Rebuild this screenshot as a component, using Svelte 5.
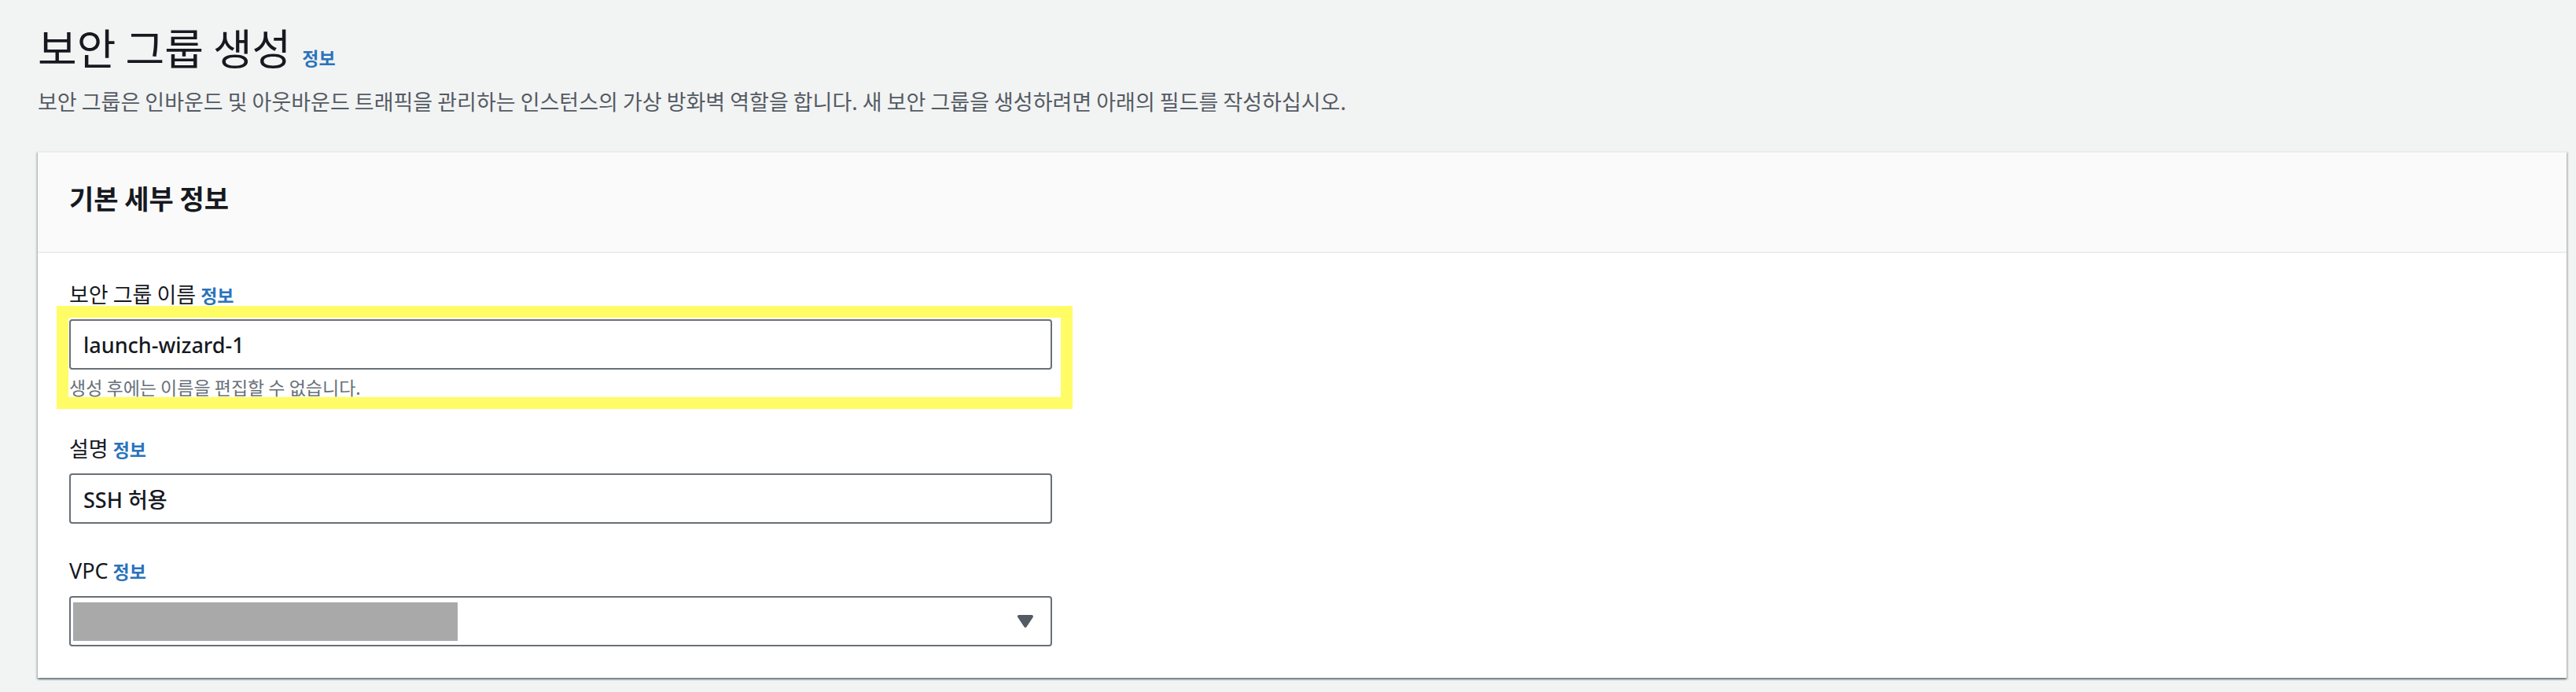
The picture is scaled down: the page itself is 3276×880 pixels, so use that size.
<script>
  let groupName = $state('launch-wizard-1');
  let description = $state('SSH 허용');
  let vpc = $state('');
</script>

<main>
  <header class="page-header">
    <div class="title-row">
      <h1>보안 그룹 생성</h1>
      <a class="info" href="#info-group">정보</a>
    </div>
    <p>보안 그룹은 인바운드 및 아웃바운드 트래픽을 관리하는 인스턴스의 가상 방화벽 역할을 합니다. 새 보안 그룹을 생성하려면 아래의 필드를 작성하십시오.</p>
  </header>

  <section class="panel">
    <div class="panel-header">
      <h2>기본 세부 정보</h2>
    </div>
    <form class="fields">
      <div class="field">
        <div class="label-row">
          <label for="group-name">보안 그룹 이름</label>
          <a class="info" href="#info-name">정보</a>
        </div>
        <div class="control">
          <input id="group-name" type="text" bind:value={groupName} aria-describedby="name-hint" />
          <span id="name-hint" class="hint">생성 후에는 이름을 편집할 수 없습니다.</span>
          <span class="highlight" aria-hidden="true"></span>
        </div>
      </div>

      <div class="field">
        <div class="label-row">
          <label for="description">설명</label>
          <a class="info" href="#info-description">정보</a>
        </div>
        <div class="control">
          <input id="description" type="text" bind:value={description} />
        </div>
      </div>

      <div class="field">
        <div class="label-row">
          <label class="latin" for="vpc">VPC</label>
          <a class="info" href="#info-vpc">정보</a>
        </div>
        <div class="control">
          <select id="vpc" bind:value={vpc}>
            <option value=""></option>
          </select>
          <span class="mask" aria-hidden="true"></span>
          <svg class="caret" viewBox="0 0 20 16" aria-hidden="true">
            <path d="M2 2H18L10 14Z" fill="#545b64" stroke="#545b64" stroke-width="4" stroke-linejoin="round" />
          </svg>
        </div>
      </div>
    </form>
  </section>
</main>

<style>
  :global(body) {
    background: #f2f3f3;
  }

  main {
    padding: 22px 12px 16px 48px;
    color: #16191f;
    font-family: "Noto Sans CJK KR", sans-serif;
    font-size: 27px;
    line-height: 36px;
  }

  h1, h2, p {
    margin: 0;
  }

  .page-header {
    margin-bottom: 41px;
  }

  .title-row {
    display: flex;
    align-items: baseline;
    gap: 14px;
  }

  h1 {
    font-size: 54px;
    font-weight: 400;
    line-height: 76px;
  }

  .info {
    color: #2a73bb;
    font-size: 23px;
    font-weight: 700;
    line-height: 24px;
    text-decoration: none;
  }

  p {
    margin-top: 9px;
    color: #545b64;
    line-height: 44px;
  }

  .panel {
    background: #fff;
    border-top: 2px solid #eaeded;
    box-shadow: 0 2px 2px rgba(0, 28, 36, 0.4), 2px 2px 2px rgba(0, 28, 36, 0.15), -2px 2px 2px rgba(0, 28, 36, 0.15);
  }

  .panel-header {
    padding: 34px 40px 44px;
    background: #fafafa;
    border-bottom: 2px solid #eaeded;
  }

  h2 {
    font-size: 34px;
    font-weight: 700;
    line-height: 48px;
  }

  .fields {
    display: flex;
    flex-direction: column;
    gap: 42px;
    padding: 34px 40px 40px;
  }

  .field {
    display: flex;
    flex-direction: column;
    gap: 14px;
    max-width: 1250px;
  }

  .label-row {
    display: flex;
    align-items: baseline;
    gap: 6px;
  }

  .control {
    position: relative;
    display: flex;
    flex-direction: column;
    gap: 4px;
  }

  .latin,
  input,
  select {
    font-family: "Noto Sans", "Noto Sans CJK KR", sans-serif;
  }

  input,
  select {
    box-sizing: border-box;
    width: 100%;
    height: 64px;
    margin: 0;
    padding: 0 16px;
    border: 2px solid #687078;
    border-radius: 4px;
    background: #fff;
    color: #16191f;
    font-size: 27px;
    font-weight: 500;
    appearance: none;
  }

  .hint {
    color: #687078;
    font-size: 23px;
  }

  .highlight {
    position: absolute;
    inset: -17px -26px -10px -16px;
    border: 15px solid #fffc66;
    pointer-events: none;
  }

  .mask {
    position: absolute;
    top: 8px;
    left: 5px;
    width: 489px;
    height: 49px;
    background: #a9a9a9;
    pointer-events: none;
  }

  .caret {
    position: absolute;
    top: 24px;
    right: 24px;
    width: 20px;
    height: 16px;
    pointer-events: none;
  }
</style>
